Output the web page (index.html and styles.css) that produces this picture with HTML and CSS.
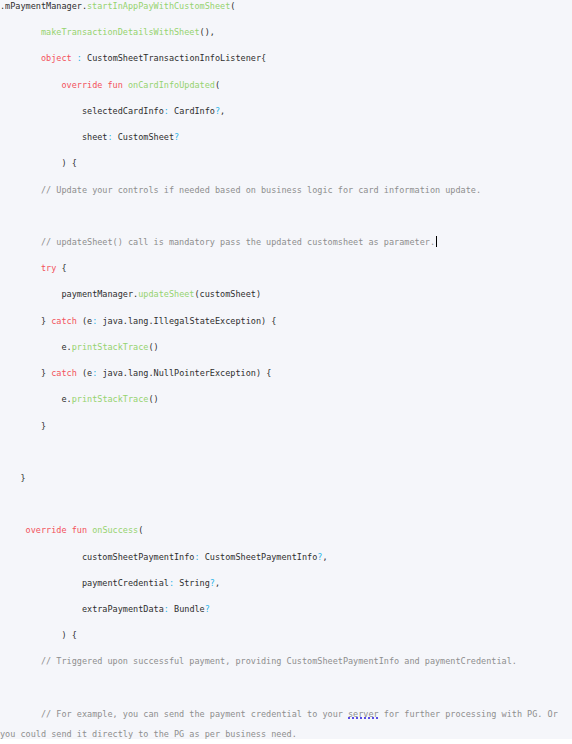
FILE: index.html
```html
<!DOCTYPE html>
<html lang="en">
<head>
<meta charset="utf-8">
<title>Custom sheet payment</title>
<link rel="stylesheet" href="styles.css">
</head>
<body>
<div class="page">
<div class="code">
<div class="ln">.mPaymentManager.<span class="fn">startInAppPayWithCustomSheet</span>(</div>
<div class="ln">        <span class="fn">makeTransactionDetailsWithSheet</span>(),</div>
<div class="ln">        <span class="kw">object</span> <span class="op">:</span> CustomSheetTransactionInfoListener{</div>
<div class="ln">            <span class="kw">override fun</span> <span class="fn">onCardInfoUpdated</span>(</div>
<div class="ln">                selectedCardInfo<span class="op">:</span> CardInfo<span class="op">?</span>,</div>
<div class="ln">                sheet<span class="op">:</span> CustomSheet<span class="op">?</span></div>
<div class="ln">            ) {</div>
<div class="ln cm">        // Update your controls if needed based on business logic for card information update.</div>
<div class="ln"> </div>
<div class="ln cm">        // updateSheet() call is mandatory pass the updated customsheet as parameter.<span class="caret"></span></div>
<div class="ln">        <span class="kw">try</span> {</div>
<div class="ln">            paymentManager.<span class="fn">updateSheet</span>(customSheet)</div>
<div class="ln">        } <span class="kw">catch</span> (e<span class="op">:</span> java.lang.IllegalStateException) {</div>
<div class="ln">            e.<span class="fn">printStackTrace</span>()</div>
<div class="ln">        } <span class="kw">catch</span> (e<span class="op">:</span> java.lang.NullPointerException) {</div>
<div class="ln">            e.<span class="fn">printStackTrace</span>()</div>
<div class="ln">        }</div>
<div class="ln"> </div>
<div class="ln">    }</div>
<div class="ln"> </div>
<div class="ln">     <span class="kw">override fun</span> <span class="fn">onSuccess</span>(</div>
<div class="ln">                customSheetPaymentInfo<span class="op">:</span> CustomSheetPaymentInfo<span class="op">?</span>,</div>
<div class="ln">                paymentCredential<span class="op">:</span> String<span class="op">?</span>,</div>
<div class="ln">                extraPaymentData<span class="op">:</span> Bundle<span class="op">?</span></div>
<div class="ln">            ) {</div>
<div class="ln cm">        // Triggered upon successful payment, providing CustomSheetPaymentInfo and paymentCredential.</div>
<div class="ln"> </div>
<div class="ln cm">        // For example, you can send the payment credential to your <span class="spell">server</span> for further processing with PG. Or you could send it directly to the PG as per business need.</div>
</div>
</div>
</body>
</html>
```

FILE: styles.css
```css
html, body {
  margin: 0;
  padding: 0;
  background: #ffffff;
}

.page {
  background: #f5f6fa;
  height: 739px;
  overflow: hidden;
}

.code {
  margin-top: -4px;
  font-family: "DejaVu Sans Mono", "Liberation Mono", monospace;
  font-size: 8.5px;
  color: #2e2e2e;
}

.ln {
  white-space: pre-wrap;
  line-height: 20px;
  min-height: 20px;
  margin-bottom: 6.22px;
}

.kw { color: #f3525a; }
.fn { color: #95d36f; }
.op { color: #2cb5e8; }
.cm { color: #8e8e8e; }

.caret {
  display: inline-block;
  width: 0;
  height: 11px;
  margin-left: 1px;
  border-left: 1px solid #000000;
  vertical-align: -2px;
}

.spell {
  text-decoration: underline dotted #5a4ee6;
  text-decoration-thickness: 2px;
  text-underline-offset: 1px;
}
```
